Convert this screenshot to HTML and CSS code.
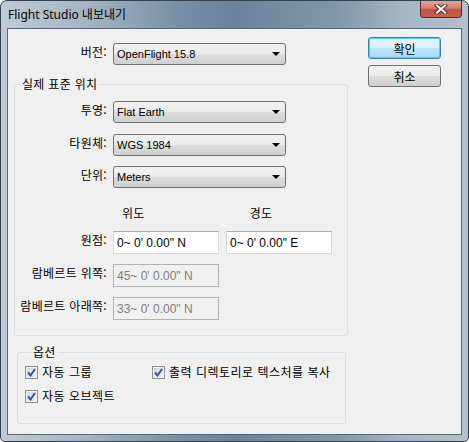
FILE: index.html
```html
<!DOCTYPE html>
<html lang="ko">
<head>
    <meta charset="UTF-8">
    <title>Flight Studio 내보내기</title>
    <link rel="stylesheet" href="styles.css">
</head>
<body>
    <div class="window">
        <div class="titlebar">
            <span class="title">Flight Studio 내보내기</span>
            <div class="close">
                <svg width="14" height="10" viewBox="0 0 14 10">
                    <path d="M3 1.5 L11 8.5 M11 1.5 L3 8.5" stroke="#3b2a27" stroke-width="4" stroke-linecap="square"/>
                    <path d="M3 1.5 L11 8.5 M11 1.5 L3 8.5" stroke="#fff" stroke-width="2.2" stroke-linecap="square"/>
                </svg>
            </div>
        </div>
        <div class="client">
            <div class="main">
                <div class="row">
                    <label class="lbl">버전:</label>
                    <div class="combo"><span>OpenFlight 15.8</span><i class="arrow"></i></div>
                </div>

                <fieldset class="group place">
                    <legend>실제 표준 위치</legend>
                    <div class="row">
                        <label class="lbl">투영:</label>
                        <div class="combo"><span>Flat Earth</span><i class="arrow"></i></div>
                    </div>
                    <div class="row sel-gap">
                        <label class="lbl">타원체:</label>
                        <div class="combo"><span>WGS 1984</span><i class="arrow"></i></div>
                    </div>
                    <div class="row sel-gap">
                        <label class="lbl">단위:</label>
                        <div class="combo"><span>Meters</span><i class="arrow"></i></div>
                    </div>

                    <div class="row heads">
                        <span class="lbl"></span>
                        <span class="head lat">위도</span>
                        <span class="head lon">경도</span>
                    </div>
                    <div class="row coord first">
                        <label class="lbl">원점:</label>
                        <input class="field" type="text" value="0~ 0' 0.00&quot; N" readonly>
                        <input class="field" type="text" value="0~ 0' 0.00&quot; E" readonly>
                    </div>
                    <div class="row coord">
                        <label class="lbl">람베르트 위쪽:</label>
                        <input class="field" type="text" value="45~ 0' 0.00&quot; N" disabled>
                    </div>
                    <div class="row coord">
                        <label class="lbl">람베르트 아래쪽:</label>
                        <input class="field" type="text" value="33~ 0' 0.00&quot; N" disabled>
                    </div>
                </fieldset>

                <fieldset class="group options">
                    <legend>옵션</legend>
                    <div class="checks">
                        <label class="chk"><span class="box"><svg width="9" height="9" viewBox="0 0 9 9"><path d="M1 4.5 L3.5 7.5 L8 1" fill="none" stroke="#3c55a0" stroke-width="2"/></svg></span>자동 그룹</label>
                        <label class="chk"><span class="box"><svg width="9" height="9" viewBox="0 0 9 9"><path d="M1 4.5 L3.5 7.5 L8 1" fill="none" stroke="#3c55a0" stroke-width="2"/></svg></span>출력 디렉토리로 텍스처를 복사</label>
                        <label class="chk"><span class="box"><svg width="9" height="9" viewBox="0 0 9 9"><path d="M1 4.5 L3.5 7.5 L8 1" fill="none" stroke="#3c55a0" stroke-width="2"/></svg></span>자동 오브젝트</label>
                    </div>
                </fieldset>
            </div>

            <div class="side">
                <button class="btn default">확인</button>
                <button class="btn">취소</button>
            </div>
        </div>
    </div>
</body>
</html>
```

FILE: styles.css
```css
body {
    margin: 0;
    background-color: #fff;
    font-family: "Noto Sans CJK KR", sans-serif;
    font-size: 12px;
    color: #000;
}
.window {
    width: 469px;
    height: 442px;
    box-sizing: border-box;
    border: 1px solid #34424f;
    border-radius: 7px 7px 5px 5px;
    padding: 0 6px 6px;
    display: flex;
    flex-direction: column;
    background: linear-gradient(to right, #bfcbd6 0%, #a4b5c4 18%, #7890a5 38%, #6b8399 50%, #8197ab 72%, #a6b6c4 86%, #b2c0cc 100%);
}
.titlebar {
    height: 27px;
    display: flex;
    align-items: center;
    flex-shrink: 0;
}
.title {
    padding-left: 1px;
    font-family: "Noto Sans", "Noto Sans CJK KR", sans-serif;
    font-size: 12px;
    margin-top: -1px;
}
.close {
    margin-left: auto;
    align-self: flex-start;
    width: 42px;
    height: 17px;
    box-sizing: border-box;
    border: 1px solid #5b2a22;
    border-top: none;
    border-radius: 0 0 4px 4px;
    background: linear-gradient(to bottom, #e3a699 0%, #d47e6d 45%, #c2503c 55%, #c9634e 100%);
    display: flex;
    justify-content: center;
    align-items: center;
}
.client {
    flex: 1;
    display: flex;
    background-color: #f0f0f0;
    border: 1px solid #56697b;
}
.main {
    padding: 14px 0 0 6px;
    width: 334px;
}
.row {
    display: flex;
    align-items: flex-start;
    gap: 6px;
}
.lbl {
    width: 93px;
    flex-shrink: 0;
    text-align: right;
    line-height: 14px;
    padding-top: 2px;
    white-space: nowrap;
    letter-spacing: 0.3px;
}
.group .lbl {
    width: 92px;
}
.combo {
    width: 173px;
    height: 22px;
    box-sizing: border-box;
    border: 1px solid #707070;
    border-radius: 3px;
    background: linear-gradient(to bottom, #f2f2f2 0%, #ebebeb 48%, #dddddd 52%, #cfcfcf 100%);
    display: flex;
    align-items: center;
    padding: 0 5px 0 3px;
    font-family: "Liberation Sans", sans-serif;
    font-size: 11px;
}
.arrow {
    margin-left: auto;
    width: 0;
    height: 0;
    border-left: 4px solid transparent;
    border-right: 4px solid transparent;
    border-top: 4px solid #000;
}
.group {
    margin: 12px 0 0;
    padding: 10px 0 15px;
    border: 1px solid #d5dfe5;
    border-radius: 3px;
    box-sizing: border-box;
    width: 334px;
    min-width: 0;
}
.group legend {
    line-height: 14px;
    padding: 0 2px;
    margin-left: 5px;
    letter-spacing: 0.3px;
}
.sel-gap {
    margin-top: 10.5px;
}
.heads {
    margin-top: 18px;
    line-height: 14px;
}
.heads .lbl {
    padding-top: 0;
    height: 14px;
}
.head {
    letter-spacing: 0.3px;
}
.head.lat {
    margin-left: 9px;
}
.head.lon {
    margin-left: 99px;
}
.coord {
    margin-top: 10px;
}
.coord.first {
    margin-top: 11px;
}
.coord .field + .field {
    margin-left: 1px;
}
.field {
    width: 106px;
    height: 23px;
    box-sizing: border-box;
    margin: 0;
    border: 1px solid #d6dae0;
    border-top-color: #abadb3;
    background-color: #fff;
    padding: 0 3px;
    font-family: "Liberation Sans", "Noto Sans CJK KR", sans-serif;
    font-size: 12px;
    color: #000;
    outline: none;
}
.field:disabled {
    background-color: #f0f0f0;
    border: 1px solid #adb2b5;
    color: #7d7d7d;
}
.options {
    margin: 9px 0 0 3px;
    width: 329px;
    padding: 6px 0 20px 7px;
}
.options legend {
    margin-left: 6px;
}
.checks {
    display: grid;
    grid-template-columns: 127px auto;
    row-gap: 10px;
}
.chk {
    display: flex;
    align-items: center;
    gap: 4px;
    line-height: 14px;
    white-space: nowrap;
    letter-spacing: 0.5px;
}
.box {
    width: 13px;
    height: 13px;
    box-sizing: border-box;
    border: 1px solid #8f8f8f;
    background: linear-gradient(135deg, #c9ced6 0%, #e6e8ec 55%, #f7f7f7 100%);
    box-shadow: inset 0 0 0 1px #f4f4f4;
    display: flex;
    justify-content: center;
    align-items: center;
}
.side {
    margin-left: auto;
    padding: 8px 20px 0 0;
    display: flex;
    flex-direction: column;
    gap: 6px;
}
.btn {
    width: 73px;
    height: 22px;
    box-sizing: border-box;
    border: 1px solid #707070;
    border-radius: 3px;
    background: linear-gradient(to bottom, #f2f2f2 0%, #ebebeb 48%, #dddddd 52%, #cfcfcf 100%);
    font-family: "Noto Sans CJK KR", sans-serif;
    font-size: 12px;
    padding: 0;
    color: #000;
}
.btn.default {
    border-color: #3c7fb1;
    background: linear-gradient(to bottom, #eaf6fd 0%, #d9f0fc 48%, #bee6fd 52%, #a7d9f5 100%);
    box-shadow: inset 0 0 0 1px #48d2f8;
}
```
